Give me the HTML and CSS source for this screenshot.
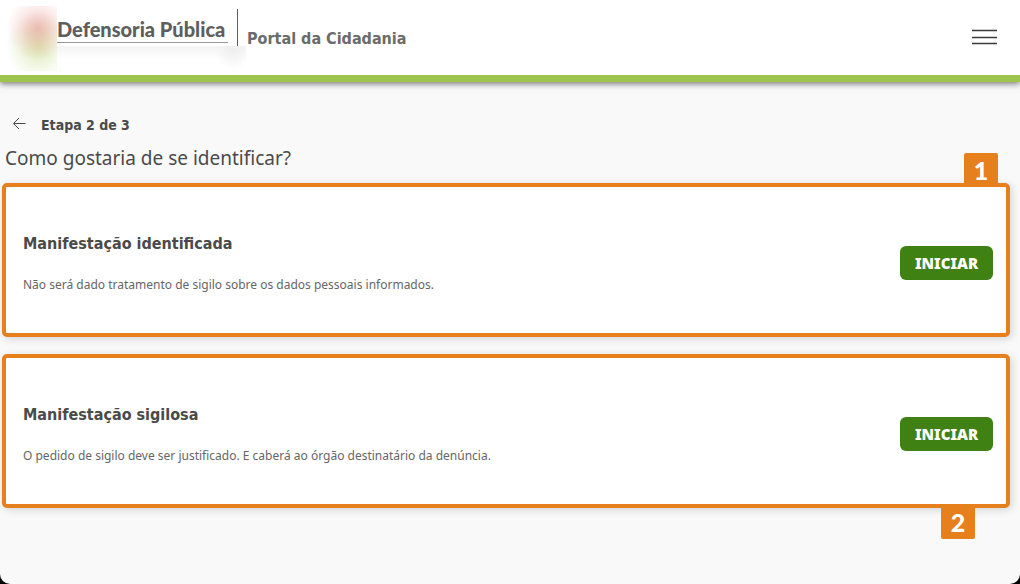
FILE: index.html
```html
<!DOCTYPE html>
<html lang="pt-BR">

<head>
    <meta charset="UTF-8">
    <meta name="viewport" content="width=device-width, initial-scale=1.0">
    <title>Portal da Cidadania</title>
    <link rel="stylesheet" href="styles.css">
</head>

<body>
    <div class="page">
        <header class="topbar">
            <a class="brand" href="#">
                <span class="brand-mark"></span>
                <span class="brand-text">
                    <span class="brand-name">Defensoria Pública</span>
                    <span class="brand-haze"></span>
                </span>
            </a>
            <span class="portal-name">Portal da Cidadania</span>
            <button class="menu-button" type="button" aria-label="Menu">
                <svg width="26" height="16" viewBox="0 0 26 16" fill="none" stroke="#3a383d" stroke-width="1.5">
                    <path d="M0 1.5h25M0 8.5h25M0 14.500h25" />
                </svg>
            </button>
        </header>

        <main>
            <div class="step">
                <a class="back" href="#" aria-label="Voltar">
                    <svg width="14" height="14" viewBox="0 0 14 14" fill="none" stroke="#4a4a4a" stroke-width="1">
                        <path d="M13.500 5.500H1.500M7 0L1.500 5.500L7 11" />
                    </svg>
                </a>
                <span class="step-label">Etapa 2 de 3</span>
            </div>
            <h1>Como gostaria de se identificar?</h1>

            <section class="card">
                <div class="card-body">
                    <h2>Manifestação identificada</h2>
                    <p>Não será dado tratamento de sigilo sobre os dados pessoais informados.</p>
                </div>
                <button class="start" type="button">INICIAR</button>
                <span class="badge badge-top">1</span>
            </section>

            <section class="card">
                <div class="card-body">
                    <h2>Manifestação sigilosa</h2>
                    <p>O pedido de sigilo deve ser justificado. E caberá ao órgão destinatário da denúncia.</p>
                </div>
                <button class="start" type="button">INICIAR</button>
                <span class="badge badge-bottom">2</span>
            </section>
        </main>
    </div>
</body>

</html>
```
FILE: styles.css
```css
* {
    box-sizing: border-box;
}

body {
    margin: 0;
    background: #000;
    color: #4a4a4a;
    font-family: Tahoma, "DejaVu Sans Condensed", "DejaVu Sans", sans-serif;
    font-size: 12px;
}

.page {
    min-height: 100vh;
    background: #f9f9f9;
    border-radius: 0 0 10px 10px;
    overflow: hidden;
}

/* Header */
.topbar {
    display: flex;
    align-items: flex-start;
    height: 82px;
    padding: 0 22px 0 4px;
    background: #fff;
    border-bottom: 7px solid #9dc54d;
    box-shadow: 0 2px 6px rgba(0, 0, 0, 0.5);
}

.brand {
    display: flex;
    padding-top: 6px;
    color: #5e5e5e;
    text-decoration: none;
}

.brand-mark {
    width: 53px;
    height: 65px;
    background:
        radial-gradient(ellipse 32px 32px at 34px 22px, rgba(230, 130, 130, 0.5), rgba(235, 150, 150, 0.2) 60%, rgba(235, 130, 130, 0)),
        radial-gradient(ellipse 32px 34px at 34px 40px, rgba(180, 210, 100, 0.5), rgba(190, 215, 120, 0.2) 60%, rgba(180, 210, 100, 0));
}

.brand-text {
    display: flex;
    flex-direction: column;
    min-width: 181px;
    margin-top: 3px;
}

.brand-name {
    height: 37px;
    padding: 8px 9px 0 0;
    border-right: 1px solid #5e5e5e;
    font-family: Lato, sans-serif;
    font-size: 20px;
    font-weight: 900;
    line-height: 25px;
    white-space: nowrap;
}

.brand-name::after {
    content: "";
    display: block;
    height: 1px;
    background: #999;
}

.brand-haze {
    height: 24px;
    margin-right: -8px;
    background:
        radial-gradient(ellipse 18px 20px at 176px 4px, #efefef, rgba(239, 239, 239, 0)),
        linear-gradient(#f4f4f4, #fff 14px);
}

.portal-name {
    margin: 29px 0 0 9px;
    color: #6b6b6b;
    font-size: 16px;
    font-weight: 700;
    line-height: 20px;
}

.menu-button {
    margin: 29px 0 0 auto;
    padding: 0;
    border: 0;
    background: none;
    cursor: pointer;
}

.menu-button svg {
    display: block;
}

/* Content */
main {
    padding: 32px 10px 76px 2px;
}

.step {
    display: flex;
    align-items: center;
    height: 22px;
    padding-left: 10px;
}

.back {
    display: flex;
    margin-right: 15px;
}

.step-label {
    font-size: 14px;
    font-weight: 700;
    line-height: 20px;
}

h1 {
    margin: 8px 0 11px 3px;
    font-family: "Noto Sans", sans-serif;
    font-size: 19px;
    font-weight: 400;
    line-height: 28px;
}

.card {
    position: relative;
    display: flex;
    align-items: center;
    justify-content: space-between;
    min-height: 154px;
    padding: 5px 13px 0 17px;
    background: #fff;
    border: 4px solid #e5801c;
    border-radius: 5px;
    box-shadow: 2px 2px 8px rgba(0, 0, 0, 0.15);
}

.card + .card {
    margin-top: 17px;
}

.card h2 {
    margin: 0 0 20px;
    font-size: 16px;
    font-weight: 700;
    line-height: 24px;
}

.card p {
    margin: 0;
    color: #666;
    font-family: "Noto Sans", sans-serif;
    line-height: 18px;
}

.start {
    width: 93px;
    height: 34px;
    padding: 0;
    border: 0;
    border-radius: 6px;
    background: #3f8213;
    color: #fff;
    font-family: Verdana, "Noto Sans", sans-serif;
    font-size: 15px;
    font-weight: 900;
    cursor: pointer;
}

/* Numbered markers on the card edges */
.badge {
    position: absolute;
    width: 34px;
    height: 34px;
    border-radius: 2px;
    background: #e5801c;
    color: #fff;
    font-family: Lato, sans-serif;
    font-size: 25px;
    font-weight: 900;
    line-height: 34px;
    text-align: center;
}

.badge-top {
    top: -34px;
    right: 8px;
}

.badge-bottom {
    right: 31px;
    bottom: -35px;
}
```
